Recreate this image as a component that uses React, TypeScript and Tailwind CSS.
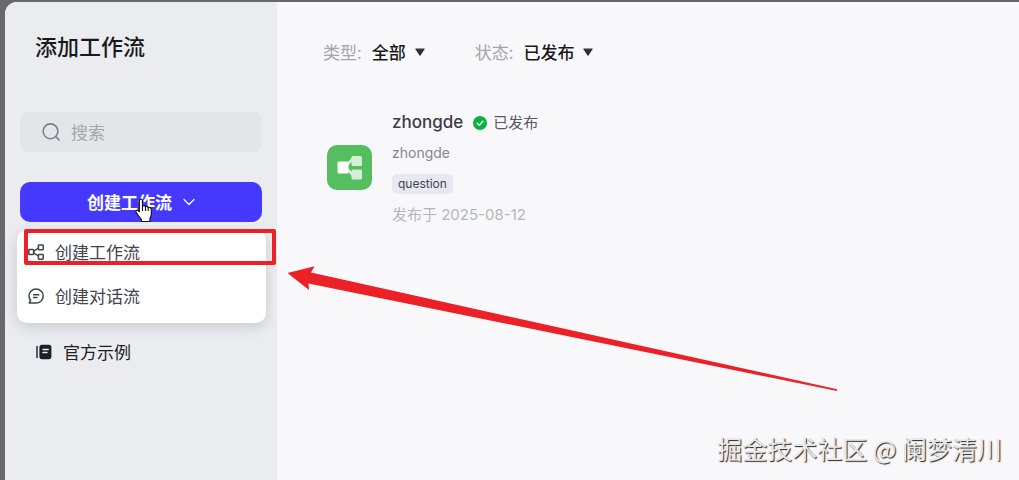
import type { ReactNode } from "react";

function FlowIcon() {
  return (
    <svg className="size-4 shrink-0" viewBox="0 0 16 16" fill="none" stroke="currentColor" strokeWidth="1.5" strokeLinejoin="round" aria-hidden="true">
      <rect x="0.8" y="5.6" width="4.8" height="5" rx="0.6" />
      <rect x="10.4" y="1" width="4.8" height="4.8" rx="0.6" />
      <rect x="10.4" y="10.4" width="4.8" height="4.8" rx="0.6" />
      <path d="M5.6 7.4 10.4 4M5.6 8.8l4.8 3.2" />
    </svg>
  );
}

function ChatIcon() {
  return (
    <svg className="size-4 shrink-0" viewBox="0 0 16 16" fill="none" stroke="currentColor" strokeWidth="1.5" strokeLinecap="round" strokeLinejoin="round" aria-hidden="true">
      <path d="M1.2 15.1h6.9A7.1 7.1 0 1 0 1 8c0 1.7.6 3.2 1.6 4.4z" />
      <path d="M5.6 6.700h5.2M5.6 9.5h3.3" />
    </svg>
  );
}

function NotebookIcon() {
  return (
    <svg className="size-4 shrink-0" viewBox="0 0 16 16" fill="none" aria-hidden="true">
      <path d="M1 2.5v11" stroke="#1c1f23" strokeWidth="1.4" strokeLinecap="round" />
      <rect x="3.4" y="0.8" width="12" height="14.4" rx="2.6" fill="#1c1f23" />
      <path d="M7 5.4h5.2M7 8.6h4" stroke="#ebecf0" strokeWidth="1.5" strokeLinecap="round" />
    </svg>
  );
}

function Filter({ id, label, options }: { id: string; label: string; options: string[] }) {
  return (
    <div className="flex items-center">
      <label htmlFor={id} className="text-[#a3a5ab]">{label}:</label>
      <select id={id} className="ml-2.5 appearance-none bg-transparent font-medium text-[#17191d] outline-none [field-sizing:content]">
        {options.map((o) => (
          <option key={o}>{o}</option>
        ))}
      </select>
      <svg className="pointer-events-none ml-[9px] h-2 w-2.5" viewBox="0 0 10 8" aria-hidden="true">
        <path d="M.8.5h8.4q.8 0 .4.7L5.5 7.5q-.5.7-1 0L.4 1.200Q0 .5.8.5z" fill="#303238" />
      </svg>
    </div>
  );
}

function MenuItem({ icon, children }: { icon: ReactNode; children: ReactNode }) {
  return (
    <button type="button" role="menuitem" className="flex h-11 w-full items-center gap-[11px] px-[11px] text-[17px] text-[#41444c]">
      {icon}
      {children}
    </button>
  );
}

export default function App() {
  return (
    <div className="relative flex min-h-screen overflow-hidden bg-[#68686c] pt-[2px] pl-[5px] font-['Inter','Noto_Sans_CJK_SC',sans-serif]">
      <div className="flex flex-1 rounded-tl-xl bg-[#f8f8fb]">
        <aside className="w-[272px] shrink-0 rounded-tl-xl bg-[#ebecf0] px-[15px] pt-[27px] font-['Noto_Sans_CJK_SC',sans-serif]">
          <h1 className="pl-[15px] text-[22px] leading-8 font-medium text-[#17191d]">添加工作流</h1>

          <div className="mt-[51px] flex h-10 items-center gap-2.5 rounded-lg bg-[#e4e5e9] px-[21px]">
            <svg className="size-5 shrink-0" viewBox="0 0 20 20" fill="none" stroke="#7d7f86" strokeWidth="1.6" strokeLinecap="round" aria-hidden="true">
              <circle cx="9.5" cy="9.3" r="7.4" />
              <path d="m14.9 14.8 3.1 3.1" />
            </svg>
            <input type="search" aria-label="搜索" placeholder="搜索" className="min-w-0 flex-1 bg-transparent text-[17px] text-[#41444c] outline-none placeholder:text-[#a3a5ab]" />
          </div>

          <div className="relative mt-[30px]">
            <button type="button" aria-haspopup="menu" aria-expanded="true" className="flex h-10 w-full items-center justify-center gap-[11px] rounded-[10px] bg-[#4539ff] text-[17px] font-bold text-white">
              创建工作流
              <svg className="h-3 w-3" viewBox="0 0 12 12" fill="none" stroke="currentColor" strokeWidth="1.3" strokeLinecap="round" strokeLinejoin="round" aria-hidden="true">
                <path d="m1 3.5 5 5 5-5" />
              </svg>
            </button>

            <div role="menu" className="absolute top-full -right-1 -left-[3px] mt-2 rounded-[10px] bg-white pb-[5px] shadow-[0_4px_14px_rgba(0,0,0,0.14)]">
              <MenuItem icon={<FlowIcon />}>创建工作流</MenuItem>
              <MenuItem icon={<ChatIcon />}>创建对话流</MenuItem>
            </div>

            <div className="pointer-events-none absolute top-[47px] -right-[14px] left-1 h-9 rounded-xs border-4 border-[#ec2027]" />

            <svg className="pointer-events-none absolute top-4 left-[114px] h-[25px] w-[19px]" viewBox="0 0 18 24" aria-hidden="true">
              <path d="M5 2.6C5 .5 8 .5 8 2.6V8c.5-1.1 2.7-.8 2.900.5.7-.9 2.4-.5 2.600.8 1.300-.7 3 .1 3 2v3.900c0 2.100-.6 3.300-1.300 4.600v2.800H6.900v-2.100c-1.700-1.700-3.100-4-4.700-6.200-1.400-2 .6-3.400 2-2L5 13.2z" fill="#fff" stroke="#111" strokeWidth="1.1" strokeLinejoin="round" />
              <path d="M8 8v4M10.9 8.9V12M13.5 9.7V12" stroke="#111" strokeWidth="1.1" strokeLinecap="round" />
            </svg>
          </div>

          <a href="#examples" className="mt-[110px] flex h-10 items-center gap-[11px] pl-4 text-[17px] text-[#1c1f23]">
            <NotebookIcon />
            官方示例
          </a>
        </aside>

        <main className="flex-1 px-[46px] pt-[38px]">
          <div className="flex gap-[50px] font-['Noto_Sans_CJK_SC',sans-serif] text-[17px] leading-6">
            <Filter id="type" label="类型" options={["全部"]} />
            <Filter id="status" label="状态" options={["已发布"]} />
          </div>

          <article className="mt-11 flex gap-5 pl-1">
            <svg className="mt-[37px] size-[45px] shrink-0" viewBox="0 0 45 45" aria-hidden="true">
              <rect width="45" height="45" rx="10" fill="#55bf5f" />
              <path d="m20 20 6-7M20 24l6 6" stroke="#d9f0db" strokeWidth="2.6" />
              <rect x="24.5" y="11" width="10.5" height="10" rx="1.5" fill="#d5efd7" />
              <rect x="24.5" y="24.5" width="10.5" height="10" rx="1.5" fill="#d5efd7" />
              <rect x="10.5" y="16.5" width="11" height="12" rx="1.5" fill="#fff" />
            </svg>
            <div>
              <div className="flex h-[30px] items-center gap-2.5">
                <h2 className="text-[17px] font-medium text-[#3b3d45]">zhongde</h2>
                <span className="flex items-center gap-1.5 text-[15px] text-[#555861]">
                  <svg className="size-3.5" viewBox="0 0 14 14" fill="none" aria-hidden="true">
                    <circle cx="7" cy="7" r="7" fill="#05b33f" />
                    <path d="m4.2 7.2 2 2 3.7-3.9" stroke="#fff" strokeWidth="1.4" strokeLinecap="round" strokeLinejoin="round" />
                  </svg>
                  已发布
                </span>
              </div>
              <p className="text-sm leading-[30px] text-[#85878f]">zhongde</p>
              <div className="flex h-8 items-center">
                <span className="rounded-[5px] bg-[#e7e9f2] px-1.5 text-xs leading-5 text-[#41444f]">question</span>
              </div>
              <p className="text-[15px] leading-[30px] text-[#b4b6bf]">发布于 2025-08-12</p>
            </div>
          </article>
        </main>
      </div>

      <svg className="pointer-events-none absolute top-[264px] left-[286px] h-[130px] w-[554px]" viewBox="286 264 554 130" aria-hidden="true">
        <path d="M287.5 273 314.5 266.3 311 272.6 837 389.2V391L308.5 283.5 309 290z" fill="#ec2027" />
      </svg>

      <p className="pointer-events-none absolute right-[17px] bottom-3.5 font-['Noto_Sans_CJK_SC',sans-serif] text-[25px] leading-9 text-[#e8e8ea] [text-shadow:1px_1px_1px_#222]">
        掘金技术社区 @ 阑梦清川
      </p>
    </div>
  );
}
